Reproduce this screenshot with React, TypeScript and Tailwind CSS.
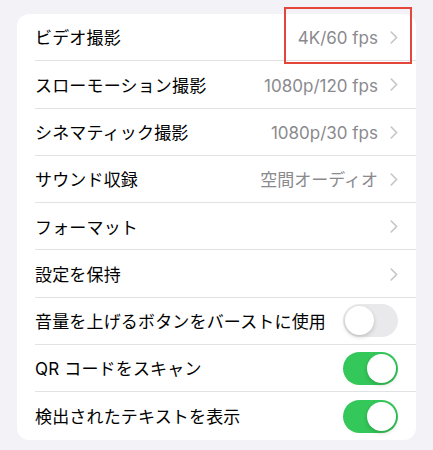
import React from 'react';

interface Row {
  label: string;
  value?: string;
  toggle?: boolean;
}

const rows: Row[] = [
  { label: 'ビデオ撮影', value: '4K/60 fps' },
  { label: 'スローモーション撮影', value: '1080p/120 fps' },
  { label: 'シネマティック撮影', value: '1080p/30 fps' },
  { label: 'サウンド収録', value: '空間オーディオ' },
  { label: 'フォーマット', value: '' },
  { label: '設定を保持', value: '' },
  { label: '音量を上げるボタンをバーストに使用', toggle: false },
  { label: 'QR コードをスキャン', toggle: true },
  { label: '検出されたテキストを表示', toggle: true },
];

const Chevron = () => (
  <svg width="8" height="13" viewBox="0 0 8 13" fill="none" className="shrink-0 mt-[1px]">
    <path d="M1.2 1 L6.6 6.5 L1.2 12" stroke="#c4c4c7" strokeWidth="1.6" strokeLinecap="round" strokeLinejoin="round" />
  </svg>
);

const Toggle = ({ on }: { on: boolean }) => (
  <div
    className={
      on
        ? 'w-[55px] h-[33px] rounded-full bg-[#34c759] p-[2px] flex justify-end shrink-0'
        : 'w-[55px] h-[33px] rounded-full bg-[#e9e9eb] p-[2px] flex justify-start shrink-0'
    }>
    <div className="w-[29px] h-[29px] rounded-full bg-white shadow-[0_2px_4px_rgba(0,0,0,0.18)]" />
  </div>
);

export default function App() {
  return (
    <div
      className="relative w-[433px] h-[450px] bg-[#f2f2f7] px-[17px] pt-[14px]"
      style={{ fontFamily: '"Inter", "Noto Sans CJK JP", sans-serif' }}>
      <div className="bg-white rounded-[12px] overflow-hidden">
        {rows.map((row, i) => (
          <div key={i} className="h-[47.3px] pl-[18px] flex">
            <div
              className={
                i < rows.length - 1
                  ? 'flex-1 flex items-center justify-between pr-[18px] border-b border-[#e2e2e4]'
                  : 'flex-1 flex items-center justify-between pr-[18px]'
              }>
              <span className="pt-[4px] text-[17px] text-black tracking-[0.01em]">{row.label}</span>
              {row.toggle === undefined ? (
                <div className="flex items-center gap-[12px]">
                  {row.value ? <span className="pt-[4px] text-[17px] text-[#8a8a8e]">{row.value}</span> : null}
                  <Chevron />
                </div>
              ) : (
                <Toggle on={row.toggle} />
              )}
            </div>
          </div>
        ))}
      </div>
      {/* highlight box */}
      <div className="absolute left-[284px] top-[7px] w-[128px] h-[57px] border-2 border-[#e5463c]" />
    </div>
  );
}
